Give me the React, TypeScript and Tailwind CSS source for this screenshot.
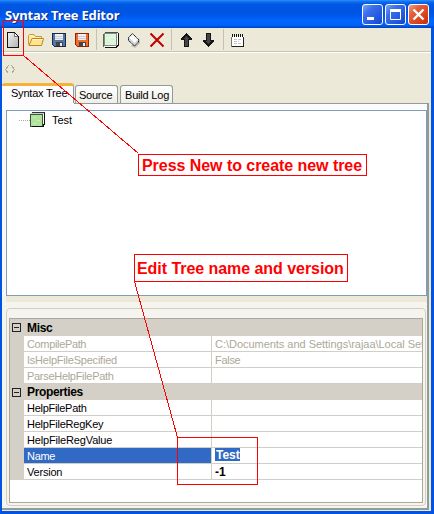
import type { ReactNode } from "react";

type Entry = { name: string; value?: string; tracking: string; valueTracking?: string };

const misc: Entry[] = [
  { name: "CompilePath", tracking: "tracking-[-0.35px]", value: "C:\\Documents and Settings\\rajaa\\Local Settings", valueTracking: "tracking-[-0.03px]" },
  { name: "IsHelpFileSpecified", tracking: "tracking-[-0.22px]", value: "False", valueTracking: "tracking-[-0.3px]" },
  { name: "ParseHelpFilePath", tracking: "tracking-[-0.3px]" },
];

const properties: Entry[] = [
  { name: "HelpFilePath", tracking: "tracking-[-0.28px]" },
  { name: "HelpFileRegKey", tracking: "tracking-[-0.22px]" },
  { name: "HelpFileRegValue", tracking: "tracking-[-0.16px]" },
  { name: "Name", tracking: "tracking-[-0.3px]", value: "Test", valueTracking: "tracking-[0px]" },
  { name: "Version", tracking: "tracking-[-0.2px]", value: "-1", valueTracking: "tracking-[0px]" },
];

function Icon({ children, className = "" }: { children: ReactNode; className?: string }) {
  return (
    <svg width="16" height="16" viewBox="0 0 16 16" className={`shrink-0 ${className}`} shapeRendering="crispEdges">
      {children}
    </svg>
  );
}

function Separator({ className }: { className: string }) {
  return <div className={`h-[21px] w-px shrink-0 bg-[#c5c2b2] ${className}`} />;
}

function NewIcon() {
  return (
    <Icon>
      <defs>
        <linearGradient id="page" x1="0" y1="0" x2="1" y2="1">
          <stop offset="0" stopColor="#f4f4f4" />
          <stop offset="1" stopColor="#b4b4b4" />
        </linearGradient>
      </defs>
      <path d="M2.500 .5H9.500L13.500 4.500V15.500H2.500Z" fill="url(#page)" stroke="#111" />
      <path d="M9.500 1V4.500H13" fill="#fff" stroke="#777" />
    </Icon>
  );
}

function OpenIcon() {
  return (
    <svg width="16" height="16" viewBox="0 0 16 16" className="shrink-0">
      <path d="M.5 12.500V3.500L1.500 2.500H6L7.500 4.500H13.500V7" fill="#ffedb0" stroke="#cf962b" />
      <path d="M1 13.500L4 6.500H15.500L13.500 13.500Z" fill="#ffe391" stroke="#c08414" />
      <path d="M4.500 7.500H14.500" stroke="#fff8d8" />
    </svg>
  );
}

function SaveIcon({ body, dark }: { body: string; dark: string }) {
  return (
    <Icon>
      <path d="M1.500 1.500H14.500V14.500H3.500L1.500 12.500Z" fill={body} stroke={dark} />
      <rect x="4" y="2" width="8" height="6" fill="#f1f1f1" />
      <path d="M4 4.500H12M4 6.500H12" stroke="#c7ccd3" />
      <rect x="5" y="10" width="7" height="4" fill="#454545" />
      <rect x="9" y="11" width="2" height="3" fill="#eee" />
    </Icon>
  );
}

function BookIcon() {
  return (
    <Icon>
      <path d="M2 1H15V13L13 15H2Z" fill="#fff" />
      <path d="M1.500 1.500H13.500V13.500H1.500Z" fill="#e0f5de" stroke="#7d8c7b" />
      <path d="M2 .5H14.500" stroke="#4a5549" />
      <path d="M15.500 1V13.500H14.500V14.500H13.500V15.500H2" fill="none" stroke="#111" />
      <path d="M.5 2V15" stroke="#59635a" />
      <path d="M4 4.500H6M8 7.500H11M4 10.500H7" stroke="#cfeeca" />
    </Icon>
  );
}

function TreeBookIcon() {
  return (
    <Icon>
      <path d="M2 1H15V13L13 15H2Z" fill="#fff" />
      <path d="M2 .5H15" stroke="#333" />
      <path d="M.5 2.500H12.500V14.500H.5Z" fill="#b0e49c" stroke="#3b5537" />
      <path d="M1 1.500H14" stroke="#cfcfcf" />
      <path d="M14.500 1V12.500H13.500V14.500H2" fill="none" stroke="#111" />
      <path d="M3 5.500H6M7 8.500H10M3 11.500H6" stroke="#c6edb8" />
    </Icon>
  );
}

function TagIcon() {
  return (
    <svg width="16" height="16" viewBox="0 0 16 16" className="shrink-0">
      <path d="M5 14L9 16L14 11.500V7.500L12 6Z" fill="#999" opacity=".5" />
      <path d="M2.500 5.500L6.500 1.500L12.500 7.500V10L8.500 14L2.500 8.500Z" fill="#d2d2d2" stroke="#111" strokeDasharray="1.400 .5" />
      <path d="M3.200 5.700L6.500 2.500L11.700 7.700L8.500 11Z" fill="#fafafa" />
    </svg>
  );
}

function ArrowIcon({ down = false }: { down?: boolean }) {
  return (
    <Icon className={down ? "rotate-180" : ""}>
      <path d="M8 1H9V2H10V3H11V4H12V5H13V6H14V8H11V15H6V8H3V6H4V5H5V4H6V3H7V2H8Z" fill="#161616" />
      <path d="M8 4H9V5H10V6H11V7H10V14H7V7H6V6H7V5H8Z" fill="#454545" />
    </Icon>
  );
}

function NotepadIcon() {
  return (
    <Icon>
      <path d="M1 3H14V14H1Z" fill="#fff" />
      <path d="M1.500 4V13.500" stroke="#777" />
      <path d="M2 13.500H13.500V4" fill="none" stroke="#222" />
      <path d="M2 2.500H14" stroke="#111" strokeWidth="3" strokeDasharray="1 1" />
      <path d="M4 6.500H11M4 8.500H9M4 10.500H11" stroke="#c8c8c8" strokeDasharray="3 1" />
    </Icon>
  );
}

function WindowButton({ close = false, children }: { close?: boolean; children: ReactNode }) {
  return (
    <div className={`flex h-[21px] w-[21px] items-center justify-center rounded-[3px] border border-white ${close ? "bg-[linear-gradient(135deg,#f0a088_0%,#e4603c_30%,#d93d14_75%,#b83210_100%)]" : "bg-[linear-gradient(135deg,#7fa5f5_0%,#3c70ec_30%,#2056df_75%,#1844bb_100%)]"}`}>
      <svg width="19" height="19" viewBox="0 0 19 19">{children}</svg>
    </div>
  );
}

function Tab({ label, className }: { label: string; className: string }) {
  return (
    <div className={`h-[18px] shrink-0 rounded-t-[3px] border border-b-0 border-[#919b9c] bg-gradient-to-b from-white to-[#efeee6] whitespace-nowrap ${className}`}>
      {label}
    </div>
  );
}

function Header({ title, first = false }: { title: string; first?: boolean }) {
  return (
    <div className={`flex shrink-0 items-center bg-[#d4d0c8] ${first ? "h-[17px]" : "h-4"}`}>
      <svg width="9" height="9" className="ml-[2px] shrink-0" shapeRendering="crispEdges">
        <path d="M.5 .5H8.500V8.500H.5ZM2 4.500H7" fill="none" stroke="#222" />
      </svg>
      <span className="ml-[6px] text-[12px] leading-4 font-bold tracking-[-0.35px]">{title}</span>
    </div>
  );
}

function Row({ entry, disabled = false }: { entry: Entry; disabled?: boolean }) {
  const selected = entry.name === "Name";
  return (
    <div className={`flex h-4 shrink-0 leading-[16px] ${disabled ? "text-[#aca899]" : ""}`}>
      <div className="w-[14px] shrink-0 bg-[#d4d0c8]" />
      <div className={`h-4 w-[187px] shrink-0 border-b border-[#d0cec6] pl-[3px] ${entry.tracking} ${selected ? "bg-[#316ac5] text-white" : ""}`}>
        {entry.name}
      </div>
      <div className={`h-4 min-w-0 flex-1 overflow-hidden border-b border-l border-[#d0cec6] pl-[3px] whitespace-nowrap ${disabled ? "" : "text-[12px] font-bold"} ${entry.valueTracking ?? ""}`}>
        {selected ? <span className="inline-block h-[13px] w-[25px] bg-[#316ac5] pl-px align-top leading-[15px] text-white">{entry.value}</span> : entry.value}
      </div>
    </div>
  );
}

export default function App() {
  return (
    <div className="relative flex h-[514px] w-[434px] flex-col overflow-hidden bg-[#0054e3] font-['Liberation_Sans',Arial,sans-serif] text-[11px] text-black">
      <div className="flex h-7 shrink-0 items-start justify-between bg-[linear-gradient(180deg,#3a93ff_0px,#1278f5_1px,#0058e4_4px,#0054e2_10px,#0056e8_15px,#0066ff_21px,#0062f8_25px,#003fc4_28px)] pr-[5px] pl-[5px]">
        <span className="mt-[6px] font-['Noto_Sans','Open_Sans',sans-serif] text-[13px] leading-[18px] font-bold tracking-[-0.18px] whitespace-nowrap text-white [text-shadow:1px_1px_0_#0a2f8c]">
          Syntax Tree Editor
        </span>
        <div className="mt-1 flex gap-[2px]">
          <WindowButton><path d="M4 12h7v3H4z" fill="#fff" /></WindowButton>
          <WindowButton><path d="M4.500 4.500h10v10h-10z" fill="none" stroke="#fff" /><path d="M4 4h11v3H4z" fill="#fff" /></WindowButton>
          <WindowButton close><path d="M4.500 4.500L14.500 14.500M14.500 4.500L4.500 14.500" stroke="#fff" strokeWidth="2.400" /></WindowButton>
        </div>
      </div>

      <div className="mr-[3px] mb-[3px] ml-[2px] flex min-h-0 flex-1 flex-col bg-[#ece9d8]">
        <div className="flex h-6 shrink-0 items-center border-b border-[#c9c6b7] pl-[3px]">
          <NewIcon />
          <div className="ml-[7px] flex"><OpenIcon /></div>
          <div className="ml-[7px] flex"><SaveIcon body="#5376a8" dark="#182b4c" /></div>
          <div className="ml-[7px] flex"><SaveIcon body="#f36b30" dark="#8e2608" /></div>
          <Separator className="ml-[6px]" />
          <div className="ml-[6px] flex"><BookIcon /></div>
          <div className="ml-[7px] flex"><TagIcon /></div>
          <svg width="16" height="16" viewBox="0 0 16 16" className="ml-[7px] shrink-0">
            <path d="M1.500 1.500L14.500 14.500M14.500 1.500L1.500 14.500" stroke="#c00000" strokeWidth="2" />
          </svg>
          <Separator className="ml-[6px]" />
          <div className="ml-[6px] flex"><ArrowIcon /></div>
          <div className="ml-[7px] flex"><ArrowIcon down /></div>
          <Separator className="ml-[6px]" />
          <div className="ml-[6px] flex pt-[2px]"><NotepadIcon /></div>
        </div>
        <div className="h-[31px] shrink-0 border-t border-white pt-[12px] pl-[3px]">
          <svg width="10" height="9" shapeRendering="crispEdges">
            <path d="M3.500 .5L.5 4.500L3.500 8.500M6.500 .5L9.500 4.500L6.500 8.500" fill="none" stroke="#aca899" />
          </svg>
        </div>

        <div className="flex h-5 shrink-0 items-end leading-[18px]">
          <div className="h-5 w-[72px] shrink-0 rounded-t-[3px] border-t-[3px] border-r border-t-[#f5b335] border-r-[#919b9c] bg-[#fcfcfe] pl-[9px] leading-[15px] tracking-[-0.22px] whitespace-nowrap">
            Syntax Tree
          </div>
          <Tab label="Source" className="ml-px w-[43px] pl-[3px] tracking-[-0.25px]" />
          <Tab label="Build Log" className="ml-[2px] w-[53px] pl-1 tracking-[-0.2px]" />
        </div>

        <div className="mr-[2px] mb-px flex min-h-0 flex-1 flex-col border-r-2 border-b-2 border-[#919b9c] bg-[#f5f4ee]">
          <div className="flex h-[7px] shrink-0 bg-[#fcfcfe]">
            <div className="w-[72px]" />
            <div className="flex-1 border-t border-[#919b9c]" />
          </div>
          <div className="bg-[#f8f7f4] pl-1">
            <div className="h-[186px] border border-[#7f9db9] bg-white">
              <div className="flex h-[18px] items-center">
                <div className="ml-3 w-[11px] border-t border-dotted border-[#aaa]" />
                <TreeBookIcon />
                <span className="ml-[6px]">Test</span>
              </div>
            </div>
          </div>
          <div className="ml-1 h-[6px] shrink-0 bg-[#ece9d8]" />
          <div className="mt-[6px] mr-px mb-[2px] ml-1 flex min-h-0 flex-1 flex-col rounded-[4px] border border-[#d0d0bf] px-[2px] pt-[9px] pb-[2px]">
            <div className="flex min-h-0 flex-1 flex-col border border-[#aca899] bg-white">
              <Header title="Misc" first />
              {misc.map((entry) => <Row key={entry.name} entry={entry} disabled />)}
              <Header title="Properties" />
              {properties.map((entry) => <Row key={entry.name} entry={entry} />)}
            </div>
          </div>
        </div>
      </div>

      <div className="absolute top-[154px] left-[138px] h-[22px] w-[229px] border border-[#f00] bg-white pl-[3px] text-[16px] leading-[21px] font-bold tracking-[-0.05px] whitespace-nowrap text-[#f00]">
        Press New to create new tree
      </div>
      <div className="absolute top-[254px] left-[134px] h-7 w-[214px] border border-[#f00] bg-white pl-[2px] text-[16px] leading-[27px] font-bold tracking-[-0.05px] whitespace-nowrap text-[#f00]">
        Edit Tree name and version
      </div>
      <svg width="434" height="514" className="pointer-events-none absolute inset-0" fill="none" stroke="#f00" shapeRendering="crispEdges">
        <path d="M3.500 20.500H23.500V55.500H3.500ZM23.500 55.500L138.500 153.500M134.500 281.500L177.500 437.500H257.500V484.500H177.500V437.500" />
      </svg>
    </div>
  );
}
